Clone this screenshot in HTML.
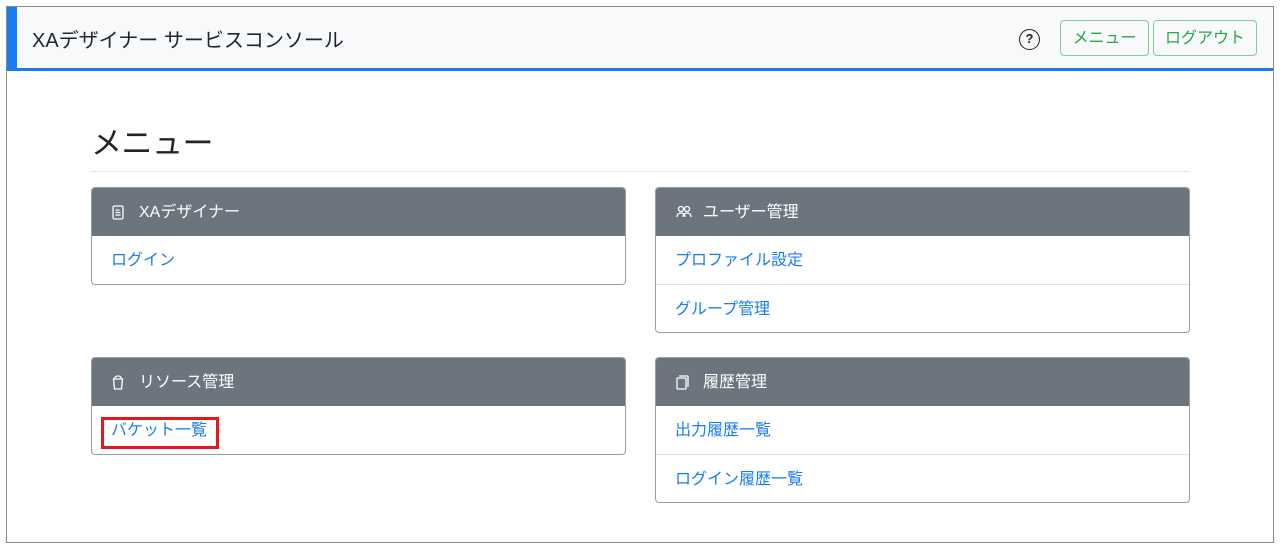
<!DOCTYPE html>
<html><head><meta charset="utf-8"><style>
*{box-sizing:border-box;margin:0;padding:0}
body{width:1280px;height:548px;background:#fff;font-family:"Liberation Sans","Noto Sans CJK JP",sans-serif;position:relative;overflow:hidden}
.frame{position:absolute;left:6px;top:6px;width:1268px;height:537px;border:1px solid #8a8a8a}
.hdr{position:absolute;left:7px;top:7px;width:1266px;height:64px;background:#f8f9fa;border-bottom:3px solid #1a7cf5}
.hdr .bar{position:absolute;left:0;top:0;width:10px;height:64px;background:#1a7cf5}
.hdr .t{position:absolute;left:25px;top:17px;font-size:20px;color:#212529}
.btn{position:absolute;top:13px;height:36px;border:1px solid #7fcf93;border-radius:4px;color:#28a745;font-size:16px;line-height:36px;text-align:center;background:#f8f9fa}
.q{position:absolute;left:1012px;top:22px;width:21px;height:21px;border:1.5px solid #222;border-radius:50%;font-size:13px;font-weight:bold;text-align:center;line-height:18px;color:#222}
h1{position:absolute;left:91px;top:118px;font-size:31px;font-weight:normal;color:#212529;letter-spacing:-0.5px}
.hr{position:absolute;left:91px;top:171px;width:1098px;height:1px;background:#e5e5e5}
.card{position:absolute;width:535px;border:1px solid #9a9ea2;border-radius:4px;overflow:hidden}
.ch{height:48px;background:#6c757d;color:#fff;font-size:16px;line-height:50px;padding-left:47px;position:relative}
.ch svg{position:absolute;left:20px;top:17px}
.row{height:48px;line-height:50px;padding-left:19px;color:#1a7cf5;font-size:16px;border-top:1px solid #dee2e6}
.ch+.row{border-top:none}
.red{position:absolute;left:101px;top:417px;width:118px;height:32px;border:3px solid #e8161b}
</style></head><body>
<div class="frame"></div>
<div class="hdr"><div class="bar"></div><div class="t">XAデザイナー サービスコンソール</div>
<div class="q">?</div>
<div class="btn" style="left:1053px;width:89px">メニュー</div>
<div class="btn" style="left:1146px;width:104px">ログアウト</div>
</div>
<h1>メニュー</h1>
<div class="hr"></div>
<div class="card" style="left:91px;top:187px"><div class="ch"><svg width="12" height="15" viewBox="0 0 12 15"><rect x="1" y="1" width="10" height="13" rx="1.5" fill="none" stroke="#fff" stroke-width="1.3"/><path d="M3.5 5h4M3.5 7.5h5M3.5 10h5" stroke="#fff" stroke-width="1.2"/></svg>XAデザイナー</div><div class="row">ログイン</div></div>
<div class="card" style="left:655px;top:187px"><div class="ch"><svg width="16" height="13" viewBox="0 0 16 13"><circle cx="5" cy="4" r="2.5" fill="none" stroke="#fff" stroke-width="1.3"/><circle cx="11" cy="4" r="2.5" fill="none" stroke="#fff" stroke-width="1.3"/><path d="M1 12c0-3 2-4 4-4s4 1 4 4M7 12c0-3 2-4 4-4s4 1 4 4" fill="none" stroke="#fff" stroke-width="1.3"/></svg>ユーザー管理</div><div class="row">プロファイル設定</div><div class="row">グループ管理</div></div>
<div class="card" style="left:91px;top:357px"><div class="ch"><svg width="12" height="15" viewBox="0 0 12 15"><path d="M1.5 4h9l-1 10h-7zM2.5 4c0-4 7-4 7 0" fill="none" stroke="#fff" stroke-width="1.3"/></svg>リソース管理</div><div class="row">バケット一覧</div></div>
<div class="card" style="left:655px;top:357px"><div class="ch"><svg width="13" height="15" viewBox="0 0 13 15"><rect x="1" y="3" width="9" height="11" rx="1" fill="none" stroke="#fff" stroke-width="1.3"/><path d="M3 1h8a1 1 0 0 1 1 1v10" fill="none" stroke="#fff" stroke-width="1.3"/></svg>履歴管理</div><div class="row">出力履歴一覧</div><div class="row">ログイン履歴一覧</div></div>
<div class="red"></div>
</body></html>
